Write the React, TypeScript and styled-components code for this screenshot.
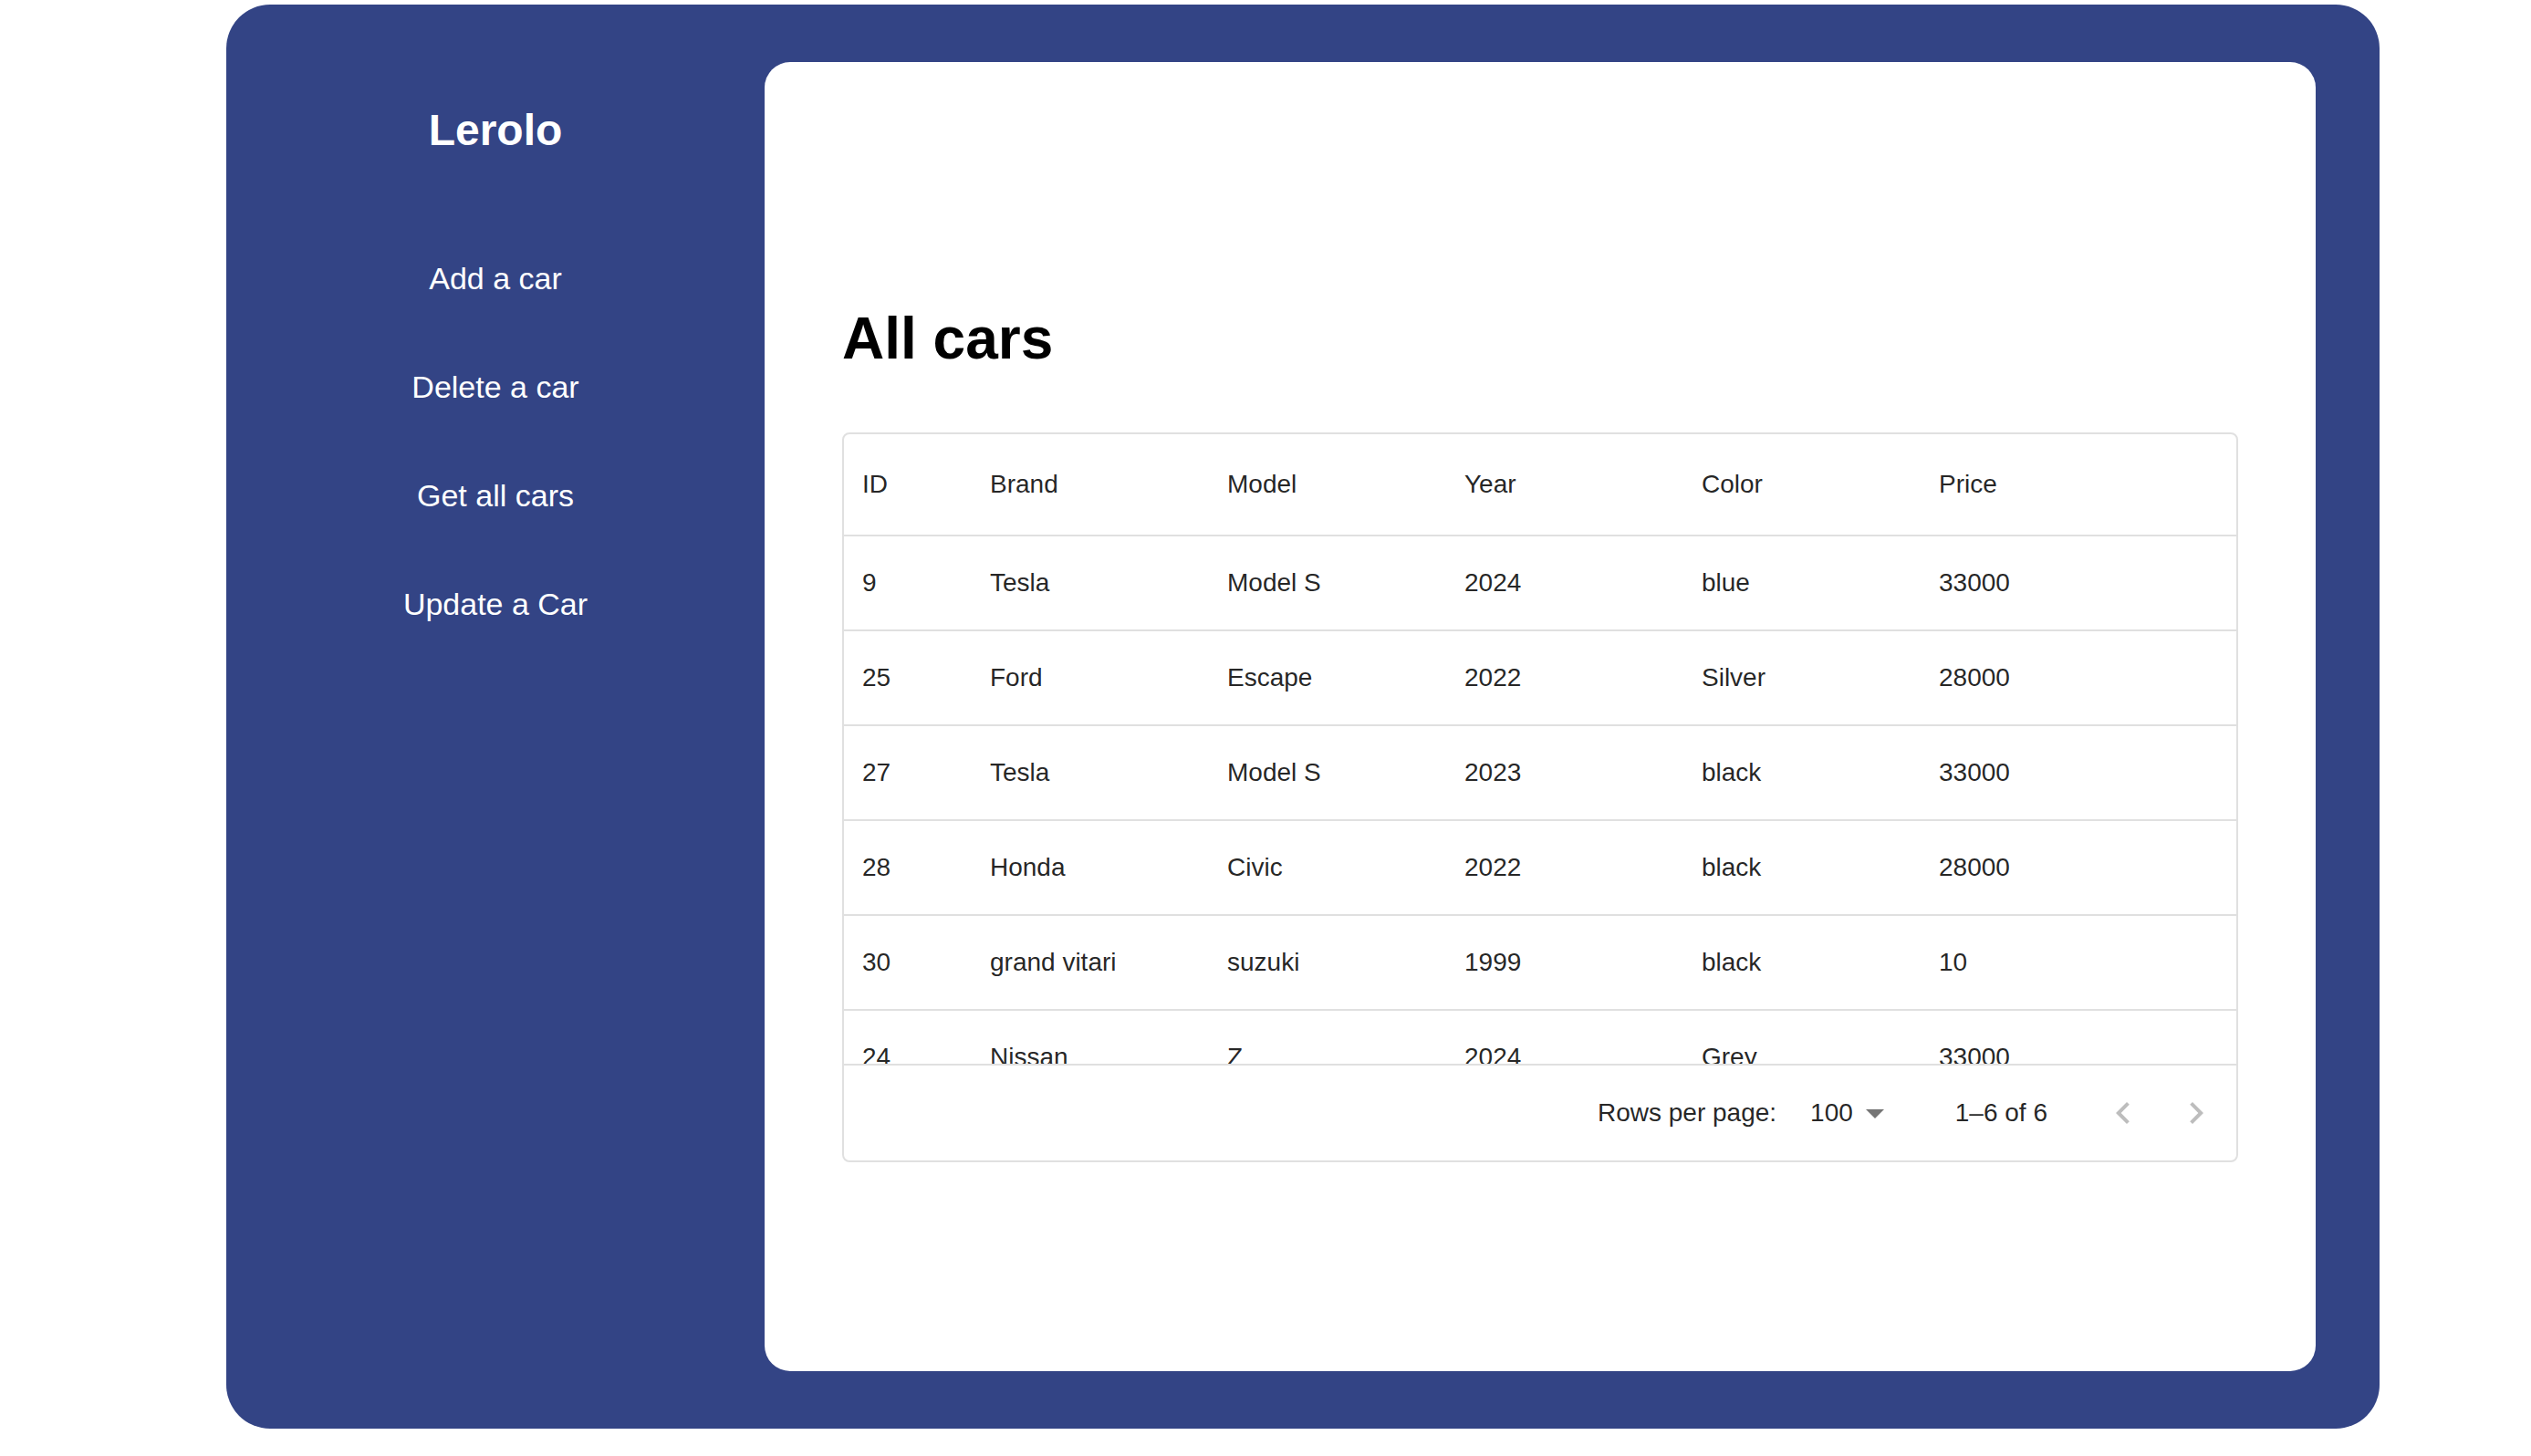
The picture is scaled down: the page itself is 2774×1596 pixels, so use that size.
import React from "react";
import styled, { createGlobalStyle } from "styled-components";

const GlobalStyle = createGlobalStyle`
	html, body {
		margin: 0;
		padding: 0;
		background: #ffffff;
		font-family: "Liberation Sans", Arial, Helvetica, sans-serif;
	}
	* {
		box-sizing: border-box;
	}
`;

interface ICar {
	id: number;
	brand: string;
	model: string;
	year: number;
	color: string;
	price: number;
}

const cars: ICar[] = [
	{ id: 9, brand: "Tesla", model: "Model S", year: 2024, color: "blue", price: 33000 },
	{ id: 25, brand: "Ford", model: "Escape", year: 2022, color: "Silver", price: 28000 },
	{ id: 27, brand: "Tesla", model: "Model S", year: 2023, color: "black", price: 33000 },
	{ id: 28, brand: "Honda", model: "Civic", year: 2022, color: "black", price: 28000 },
	{ id: 30, brand: "grand vitari", model: "suzuki", year: 1999, color: "black", price: 10 },
	{ id: 24, brand: "Nissan", model: "Z", year: 2024, color: "Grey", price: 33000 },
];

const columns = [
	{ key: "id", label: "ID", width: 140 },
	{ key: "brand", label: "Brand", width: 260 },
	{ key: "model", label: "Model", width: 260 },
	{ key: "year", label: "Year", width: 260 },
	{ key: "color", label: "Color", width: 260 },
	{ key: "price", label: "Price", width: 260 },
] as const;

const navItems = ["Add a car", "Delete a car", "Get all cars", "Update a Car"];

const Shell = styled.div`
	display: flex;
	height: 1561px;
	margin: 5px 166px 0 248px;
	background: #334485;
	border-radius: 48px;
`;

const Sidebar = styled.aside`
	width: 590px;
	flex-shrink: 0;
	display: flex;
	flex-direction: column;
	align-items: center;
	padding-top: 110px;
	color: #ffffff;
`;

const Brand = styled.h2`
	margin: 0 0 114px;
	font-size: 48px;
	line-height: 56px;
	font-weight: 700;
`;

const Nav = styled.nav`
	display: flex;
	flex-direction: column;
	align-items: center;
	gap: 79px;
`;

const NavLink = styled.a`
	font-size: 34px;
	line-height: 40px;
	color: #ffffff;
	text-decoration: none;
	cursor: pointer;
`;

const Card = styled.main`
	flex: 1;
	margin: 63px 70px 63px 0;
	background: #ffffff;
	border-radius: 28px;
	padding-top: 266px;
`;

const Content = styled.div`
	width: 90%;
	margin: 0 auto;
`;

const Title = styled.h1`
	margin: 0 0 66px;
	font-size: 64px;
	line-height: 74px;
	font-weight: 700;
	color: #000000;
`;

const Grid = styled.div`
	height: 800px;
	display: flex;
	flex-direction: column;
	border: 2px solid #e0e0e0;
	border-radius: 8px;
	color: rgba(0, 0, 0, 0.87);
	font-size: 28px;
	overflow: hidden;
`;

const Row = styled.div<{ $header?: boolean }>`
	display: flex;
	flex-shrink: 0;
	height: ${(p) => (p.$header ? "112px" : "104px")};
	border-bottom: 2px solid #e0e0e0;
	align-items: center;
`;

const Cell = styled.div<{ $width: number }>`
	width: ${(p) => p.$width}px;
	padding: 0 20px;
	white-space: nowrap;
	overflow: hidden;
`;

const Body = styled.div`
	flex: 1;
	overflow: hidden;
`;

const Footer = styled.div`
	height: 106px;
	flex-shrink: 0;
	display: flex;
	align-items: center;
	justify-content: flex-end;
	border-top: 2px solid #e0e0e0;
	padding-right: 4px;
`;

const Label = styled.span`
	margin-right: 37px;
`;

const Select = styled.div`
	display: flex;
	align-items: center;
	margin-right: 64px;

	svg {
		width: 48px;
		height: 48px;
		fill: rgba(0, 0, 0, 0.54);
	}
`;

const Range = styled.span`
	margin-right: 43px;
`;

const PageButton = styled.button`
	width: 80px;
	height: 80px;
	border: none;
	background: transparent;
	padding: 0;
	display: flex;
	align-items: center;
	justify-content: center;

	svg {
		width: 48px;
		height: 48px;
		fill: rgba(0, 0, 0, 0.26);
	}
`;

const App = () => {
	return (
		<>
			<GlobalStyle />
			<Shell>
				<Sidebar>
					<Brand>Lerolo</Brand>
					<Nav>
						{navItems.map((item) => (
							<NavLink key={item}>{item}</NavLink>
						))}
					</Nav>
				</Sidebar>
				<Card>
					<Content>
						<Title>All cars</Title>
						<Grid>
							<Row $header>
								{columns.map((col) => (
									<Cell key={col.key} $width={col.width}>
										{col.label}
									</Cell>
								))}
							</Row>
							<Body>
								{cars.map((car) => (
									<Row key={car.id}>
										{columns.map((col) => (
											<Cell key={col.key} $width={col.width}>
												{car[col.key]}
											</Cell>
										))}
									</Row>
								))}
							</Body>
							<Footer>
								<Label>Rows per page:</Label>
								<Select>
									<span>100</span>
									<svg viewBox="0 0 24 24">
										<path d="M7 10l5 5 5-5z" />
									</svg>
								</Select>
								<Range>1–6 of 6</Range>
								<PageButton disabled>
									<svg viewBox="0 0 24 24">
										<path d="M15.41 16.59L10.83 12l4.58-4.59L14 6l-6 6 6 6 1.41-1.41z" />
									</svg>
								</PageButton>
								<PageButton disabled>
									<svg viewBox="0 0 24 24">
										<path d="M8.59 16.59L13.17 12 8.59 7.41 10 6l6 6-6 6-1.41-1.41z" />
									</svg>
								</PageButton>
							</Footer>
						</Grid>
					</Content>
				</Card>
			</Shell>
		</>
	);
};

export default App;
